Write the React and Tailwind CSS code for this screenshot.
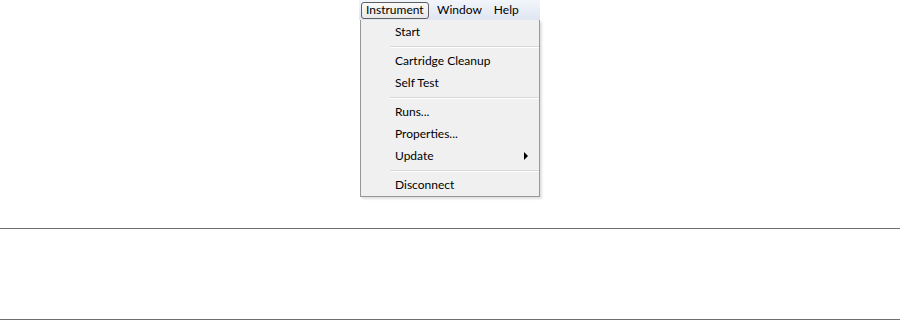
export default function App() {
  const font = { fontFamily: 'Lato, "Open Sans", "Noto Sans", sans-serif' };
  const Item = ({ label, arrow }) => (
    <div className="h-[22px] flex items-center pl-[34px] pr-[12px] relative">
      <span className="text-[12px] leading-none text-black">{label}</span>
      {arrow && (
        <svg className="absolute left-[163px] top-[7px]" width="5" height="8" viewBox="0 0 5 8">
          <path d="M0 0 L4 4 L0 8 Z" fill="#000" />
        </svg>
      )}
    </div>
  );
  const Sep = () => (
    <div className="h-[7px] flex flex-col justify-center pl-[29px]">
      <div className="h-px bg-[#d7d7d7]" />
      <div className="h-px bg-white" />
    </div>
  );
  return (
    <div className="w-[900px] h-[323px] bg-white relative overflow-hidden" style={font}>
      <div className="ml-[359px] w-[181px] h-[20px] bg-gradient-to-b from-[#f2f5fa] to-[#dfe6f2] flex items-center text-[12px] text-black">
        <div className="ml-[2px] h-[17px] w-[68px] border border-[#5f5f5f] rounded-[3px] bg-gradient-to-b from-[#fafafa] to-[#e8e8e8] flex items-center pl-[4px]">
          <span className="leading-none">Instrument</span>
        </div>
        <span className="ml-[8px] leading-none">Window</span>
        <span className="ml-[12px] leading-none">Help</span>
      </div>
      <div className="ml-[360px] w-[180px] border border-[#979797] border-t-0 bg-[#f0f0f0] pt-[1px] shadow-[2px_2px_2px_rgba(0,0,0,0.12)]">
        <Item label="Start" />
        <Sep />
        <Item label="Cartridge Cleanup" />
        <Item label="Self Test" />
        <Sep />
        <Item label="Runs..." />
        <Item label="Properties..." />
        <Item label="Update" arrow />
        <Sep />
        <Item label="Disconnect" />
      </div>
      <div className="mt-[31px] h-px bg-[#6e6e6e]" />
      <div className="mt-[90px] h-px bg-[#6e6e6e]" />
    </div>
  );
}
